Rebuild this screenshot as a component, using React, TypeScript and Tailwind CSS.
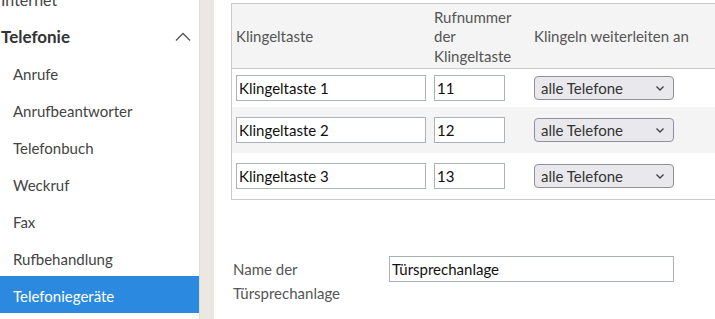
import React from "react";

const font = { fontFamily: "Lato, 'Open Sans', sans-serif" };

function Chevron() {
  return (
    <svg width="16" height="10" viewBox="0 0 16 10" fill="none" stroke="#555" strokeWidth="1.3">
      <path d="M1 8.5 L8 1.5 L15 8.5" />
    </svg>
  );
}

function SelectBox() {
  return (
    <div className="w-[140px] h-[24px] rounded-[4px] border border-[#8f8f9d] bg-[#e9e9ed] flex items-center justify-between pl-[6px] pr-[8px] pt-[1px] text-[15px] text-[#333]">
      <span>alle Telefone</span>
      <svg width="10" height="7" viewBox="0 0 10 7" fill="none" stroke="#444" strokeWidth="1.4">
        <path d="M1.5 1.5 L5 5 L8.5 1.5" />
      </svg>
    </div>
  );
}

function Row({ name, num, bg, h }: { name: string; num: string; bg: string; h: string }) {
  return (
    <div className={`grid grid-cols-[202px_100px_1fr] items-center ${bg} ${h}`}>
      <div className="pl-[4px]">
        <div className="w-[190px] h-[26px] border border-[#aab2b8] bg-white flex items-center pl-[2px] pt-[1px] text-[15px] text-[#111]">
          {name}
        </div>
      </div>
      <div>
        <div className="w-[71px] h-[26px] border border-[#aab2b8] bg-white flex items-center pl-[2px] pt-[1px] text-[15px] text-[#111]">
          {num}
        </div>
      </div>
      <div>
        <SelectBox />
      </div>
    </div>
  );
}

export default function App() {
  const items = ["Anrufe", "Anrufbeantworter", "Telefonbuch", "Weckruf", "Fax", "Rufbehandlung"];
  return (
    <div className="w-[715px] h-[319px] flex overflow-hidden bg-white" style={font}>
      <div className="w-[199px] shrink-0 bg-white">
        <div className="mt-[-20px]">
          <div className="h-[37px] flex items-center pl-[1px] pt-[3px] text-[16px] text-[#444]">Internet</div>
          <div className="h-[37px] flex items-center justify-between pl-[1px] pr-[8px] pt-[2px] text-[17px] font-bold text-[#333]">
            <span>Telefonie</span>
            <Chevron />
          </div>
          {items.map((it) => (
            <div key={it} className="h-[37px] flex items-center pl-[13px] pt-[4px] text-[15px] text-[#444]">
              {it}
            </div>
          ))}
          <div className="h-[37px] flex items-center pl-[13px] pt-[3px] text-[15px] text-white bg-[#2b8ae0]">
            Telefoniegeräte
          </div>
        </div>
      </div>
      <div className="w-[15px] shrink-0 bg-[#ebe8e3] border-l border-[#e0ddd8]" />
      <div className="flex-1 pl-[17px] pt-[3px] overflow-hidden">
        <div className="w-[520px] border border-[#cccccc]">
          <div className="grid grid-cols-[202px_100px_1fr] items-center h-[65px] pt-[2px] bg-[#f4f4f4] border-b border-[#cccccc] text-[15px] text-[#555] leading-[19.5px]">
            <div className="pl-[4px]">Klingeltaste</div>
            <div>
              Rufnummer
              <br />
              der
              <br />
              Klingeltaste
            </div>
            <div>Klingeln weiterleiten an</div>
          </div>
          <Row name="Klingeltaste 1" num="11" bg="bg-white" h="h-[38px]" />
          <Row name="Klingeltaste 2" num="12" bg="bg-[#f4f4f4]" h="h-[46px]" />
          <Row name="Klingeltaste 3" num="13" bg="bg-white" h="h-[46px]" />
        </div>
        <div className="mt-[56px] flex items-start">
          <div className="w-[158px] pl-[2px] pt-[1px] text-[15px] text-[#555] leading-[24px]">
            Name der
            <br />
            Türsprechanlage
          </div>
          <div className="w-[285px] h-[26px] border border-[#aab2b8] bg-white flex items-center pl-[2px] pt-[1px] text-[15px] text-[#111]">
            Türsprechanlage
          </div>
        </div>
      </div>
    </div>
  );
}
